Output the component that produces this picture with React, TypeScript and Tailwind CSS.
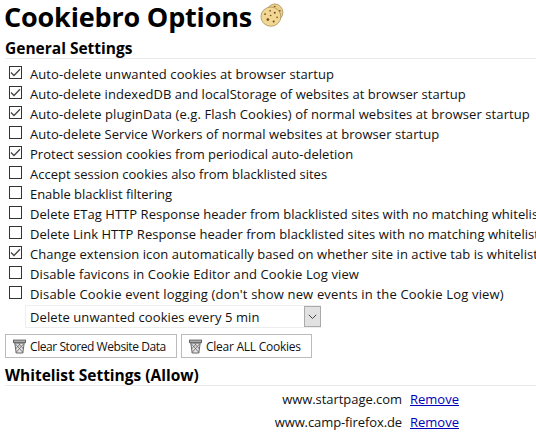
const OPTIONS = [
  { label: 'Auto-delete unwanted cookies at browser startup', checked: true, text: 'tracking-[0.09px]' },
  { label: 'Auto-delete indexedDB and localStorage of websites at browser startup', checked: true, text: 'tracking-[0.05px]' },
  { label: 'Auto-delete pluginData (e.g. Flash Cookies) of normal websites at browser startup', checked: true, text: 'tracking-[0.09px]' },
  { label: 'Auto-delete Service Workers of normal websites at browser startup', checked: false, text: 'tracking-[0.05px]' },
  { label: 'Protect session cookies from periodical auto-deletion', checked: true, text: 'tracking-[0.03px]' },
  { label: 'Accept session cookies also from blacklisted sites', checked: false, text: 'tracking-normal' },
  { label: 'Enable blacklist filtering', checked: false, text: 'tracking-[-0.04px]' },
  { label: 'Delete ETag HTTP Response header from blacklisted sites with no matching whitelist', checked: false, text: 'tracking-[0.05px]' },
  { label: 'Delete Link HTTP Response header from blacklisted sites with no matching whitelist', checked: false, text: 'tracking-[0.05px]' },
  { label: 'Change extension icon automatically based on whether site in active tab is whitelist', checked: true, text: 'tracking-[0.06px]' },
  { label: 'Disable favicons in Cookie Editor and Cookie Log view', checked: false, text: 'tracking-[0.11px]' },
  { label: "Disable Cookie event logging (don't show new events in the Cookie Log view)", checked: false, text: 'tracking-[0.17px]' },
];

const SITES = [
  { host: 'www.startpage.com', text: 'tracking-[-0.05px]' },
  { host: 'www.camp-firefox.de', text: 'tracking-[-0.1px]' },
];

function CookieIcon() {
  return (
    <svg className="mt-[3px] size-[24px] shrink-0" viewBox="0 0 26 26" fill="#e9cf8c" stroke="#a98a55" strokeWidth="0.8">
      <ellipse cx="16" cy="10.2" rx="8.8" ry="9.2" />
      <ellipse cx="11.8" cy="14.8" rx="10.8" ry="10.4" fill="#f0d793" />
      <g fill="#79471f" stroke="none">
        <circle cx="5.5" cy="12" r="1" />
        <circle cx="11" cy="8.5" r="0.9" />
        <circle cx="16" cy="10.5" r="1.1" />
        <circle cx="8.5" cy="18" r="1.4" />
        <circle cx="14.8" cy="20" r="1.1" />
        <circle cx="18.5" cy="15.5" r="0.9" />
        <circle cx="11.5" cy="13.5" r="0.9" />
        <circle cx="16" cy="3.8" r="0.9" />
        <circle cx="21.5" cy="8.5" r="0.9" />
      </g>
    </svg>
  );
}

function TrashIcon() {
  return (
    <svg className="h-[15px] w-[13px] shrink-0" viewBox="0 0 13 15" fill="none" stroke="#666">
      <path d="M1.8 4 3.2 14H9.8L11.2 4Z" fill="#e4e4e4" />
      <path d="M2.5 5 10 13.5M5.5 4.5 10.5 10M10.5 5 3 13.5M7.5 4.5 2.5 10" strokeWidth="0.8" />
      <rect x="0.5" y="1.1" width="12" height="2.5" fill="#aaa" />
    </svg>
  );
}

function Checkbox({ checked }: { checked: boolean }) {
  return (
    <span className="flex size-[13px] shrink-0 border border-[#333] bg-white">
      {checked && (
        <svg className="size-[11px]" viewBox="0 0 11 11" fill="none" stroke="#444" strokeWidth="1.3">
          <path d="M1 5.5 4 8.5 10 2.3" />
        </svg>
      )}
    </span>
  );
}

function SectionTitle({ children }: { children: string }) {
  return (
    <h2 className="ml-[5px] h-[21px] border-b border-[#eaeaea] text-[15.5px] leading-[21px] font-bold whitespace-nowrap text-black">
      {children}
    </h2>
  );
}

function ClearButton({ label, size, text }: { label: string; size: string; text: string }) {
  return (
    <button className={`flex h-6 items-center gap-1 border border-[#bbb] bg-white pl-[7px] text-[12px] whitespace-nowrap ${size}`}>
      <TrashIcon />
      <span className={text}>{label}</span>
    </button>
  );
}

export default function App() {
  return (
    <main className="h-[433px] w-[536px] overflow-hidden bg-white font-['Open_Sans','Noto_Sans',sans-serif] text-[13px] text-[#111]">
      <h1 className="flex h-[38px] items-start pl-1 text-[27px] leading-[34px] font-bold whitespace-nowrap text-black">
        <span className="w-[256px] tracking-[-0.18px]">Cookiebro Options</span>
        <CookieIcon />
      </h1>
      <SectionTitle>General Settings</SectionTitle>

      <ul className="pt-[5px]">
        {OPTIONS.map((option) => (
          <li key={option.label}>
            <label className="flex h-5 gap-2 pt-[2px] pl-[9px] leading-5 whitespace-nowrap">
              <Checkbox checked={option.checked} />
              <span className={`-mt-[2px] ${option.text}`}>{option.label}</span>
            </label>
          </li>
        ))}
      </ul>

      <div className="mt-[1px] ml-[25px] flex h-[23px] w-[296px] items-center justify-between border border-r-0 border-[#eee] pl-1">
        <span className="pt-[2px] tracking-[0.09px]">Delete unwanted cookies every 5 min</span>
        <span className="flex h-[21px] w-[17px] items-center justify-center border border-[#aaa] bg-[#e1e1e1]">
          <svg className="h-[6px] w-[9px]" viewBox="0 0 9 6" fill="none" stroke="#444">
            <path d="M0.8 0.8 4.5 4.5 8.2 0.8" />
          </svg>
        </span>
      </div>

      <div className="mt-[6px] flex gap-1 pl-[5px]">
        <ClearButton label="Clear Stored Website Data" size="w-[172px]" text="pt-[2px] tracking-[-0.43px]" />
        <ClearButton label="Clear ALL Cookies" size="w-[131px]" text="pt-[2px] tracking-[-0.25px]" />
      </div>

      <div className="mt-[7px]">
        <SectionTitle>Whitelist Settings (Allow)</SectionTitle>
      </div>

      <div className="pt-[1px]">
        {SITES.map((site) => (
          <div key={site.host} className="flex h-[23px] items-center gap-2 leading-5 whitespace-nowrap">
            <span className="flex w-[402px] justify-end">
              <span className={site.text}>{site.host}</span>
            </span>
            <a className="text-[#0000bb] underline" href="#">Remove</a>
          </div>
        ))}
      </div>
    </main>
  );
}
